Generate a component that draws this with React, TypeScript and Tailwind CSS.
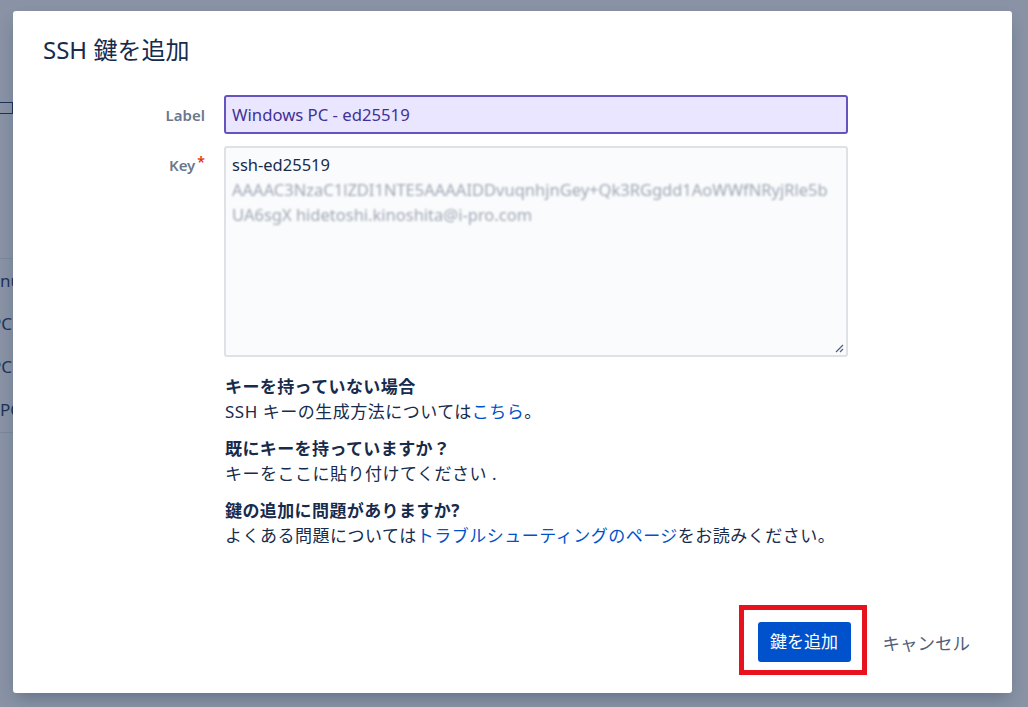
import type { ReactNode } from 'react';

const font = { fontFamily: '"Noto Sans", "Noto Sans CJK JP", sans-serif' };

function FieldLabel({ children, required }: { children: ReactNode; required?: boolean }) {
  return (
    <div className="flex justify-end items-start text-[15px] font-semibold text-[#6b778c] leading-[20px]">
      {children}
      {required && <span className="text-[#de350b] text-[14px] leading-[14px] ml-[2px]">*</span>}
    </div>
  );
}

function HelpBlock({ title, children }: { title: string; children: ReactNode }) {
  return (
    <div className="flex flex-col">
      <div className="font-bold text-[#172b4d] tracking-[0.4px]">{title}</div>
      <div className="text-[#172b4d] tracking-[0.5px]">{children}</div>
    </div>
  );
}

function ResizeGrip() {
  return (
    <svg width="10" height="10" viewBox="0 0 10 10" className="absolute right-[2px] bottom-[2px]">
      <path d="M9 2 L2 9 M9 6 L6 9" stroke="#505f79" strokeWidth="1.2" fill="none" />
    </svg>
  );
}

export default function App() {
  return (
    <div className="relative w-full h-[707px] overflow-hidden bg-[#8993a5]" style={font}>
      {/* page behind the overlay */}
      <div className="flex flex-col pt-[102px] text-[#1f3359] text-[17px]">
        <div className="w-[22px] h-[12px] -ml-[9px] border border-[#1f3359]" />
        <div className="mt-[144px] border-t border-[#7c879a] w-[40px]" />
        <div className="flex flex-col gap-[18px] pt-[9px] leading-[25px]">
          <span className="-ml-[25px]">Menu</span>
          <span className="-ml-[9px]">PC</span>
          <span className="-ml-[9px]">PC</span>
          <span>PC</span>
        </div>
        <div className="mt-[10px] border-t border-[#7c879a] w-[40px]" />
      </div>

      {/* modal */}
      <div className="absolute left-[13px] top-[11px] w-[999px] h-[682px] bg-white rounded-[3px] shadow-[0_8px_16px_-4px_rgba(9,30,66,0.3)] flex flex-col px-[30px] pt-[23px] pb-[18px]">
        <h2 className="text-[24px] leading-[32px] text-[#172b4d] font-normal">SSH 鍵を追加</h2>

        <div className="grid grid-cols-[162px_624px] gap-x-[19px] gap-y-[12px] mt-[29px]">
          <div className="flex items-center justify-end h-[39px]">
            <FieldLabel>Label</FieldLabel>
          </div>
          <div className="h-[39px] rounded-[3px] border-2 border-[#6554c0] bg-[#eae6ff] px-[6px] flex items-center text-[16.7px] text-[#403294]">
            Windows PC - ed25519
          </div>

          <div className="pt-[9px]">
            <FieldLabel required>Key</FieldLabel>
          </div>
          <div className="relative h-[211px] rounded-[3px] border-2 border-[#dfe1e6] bg-[#fafbfc] px-[6px] pt-[4px] text-[16.5px] leading-[25px]">
            <div className="text-[#172b4d]">ssh-ed25519</div>
            <div className="text-[#a0a8b6] blur-[1px] break-all">
              AAAAC3NzaC1lZDI1NTE5AAAAIDDvuqnhjnGey+Qk3RGgdd1AoWWfNRyjRle5b
              <br />
              UA6sgX hidetoshi.kinoshita@i-pro.com
            </div>
            <ResizeGrip />
          </div>

          <div />
          <div className="flex flex-col gap-[12px] mt-[5px] pl-[1px] text-[17px] leading-[25px]">
            <HelpBlock title="キーを持っていない場合">
              SSH キーの生成方法については<span className="text-[#0052cc]">こちら</span>。
            </HelpBlock>
            <HelpBlock title="既にキーを持っていますか？">キーをここに貼り付けてください .</HelpBlock>
            <HelpBlock title="鍵の追加に問題がありますか?">
              よくある問題については<span className="text-[#0052cc]">トラブルシューティングのページ</span>をお読みください。
            </HelpBlock>
          </div>
        </div>

        <div className="flex-1" />

        <div className="flex justify-end items-center gap-[4px]">
          <div className="border-[5px] border-[#e8121f] pl-[14px] pr-[11px] pt-[12px] pb-[8px]">
            <button className="h-[40px] px-[12.5px] rounded-[3px] bg-[#0052cc] text-white text-[17px] leading-[40px]">
              鍵を追加
            </button>
          </div>
          <button className="h-[40px] mt-[6px] px-[12px] text-[17.5px] text-[#505f79]">キャンセル</button>
        </div>
      </div>
    </div>
  );
}
